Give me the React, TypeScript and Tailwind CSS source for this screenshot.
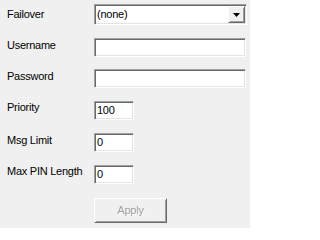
const sunken =
  "border border-t-[#a0a0a0] border-l-[#a0a0a0] border-b-white border-r-white shadow-[inset_1px_1px_0_#696969,inset_-1px_-1px_0_#e3e3e3] bg-white";
const raised =
  "border border-t-white border-l-white border-b-[#696969] border-r-[#696969] shadow-[inset_1px_1px_0_#f0f0f0,inset_-1px_-1px_0_#a0a0a0] bg-[#f0f0f0]";

function Label({ text, pad = "pt-[1px]" }: { text: string; pad?: string }) {
  return <div className={`w-[87px] shrink-0 leading-[13px] ${pad}`}>{text}</div>;
}

function TextBox({ value = "", wide = false }: { value?: string; wide?: boolean }) {
  return (
    <div
      className={`${sunken} h-[19px] ${wide ? "w-[152px]" : "w-[40px]"} pl-[2px] pt-[2px] leading-[13px] text-black`}
    >
      {value}
    </div>
  );
}

export default function App() {
  return (
    <div
      className="w-[250px] h-[228px] bg-[#f0f0f0] pl-[7px] pt-[4px] flex flex-col text-[11px] tracking-[-0.25px] text-black"
      style={{ fontFamily: '"Liberation Sans", Arial, sans-serif' }}
    >
      <div className="flex h-[21px]">
        <Label text="Failover" pad="pt-[4px]" />
        <div className={`${sunken} w-[153px] h-[21px] flex items-start`}>
          <div className="flex-1 pl-[2px] pt-[3px] leading-[13px]">(none)</div>
          <div className={`${raised} w-[17px] h-[17px] mt-[1px] mr-[1px] flex items-center justify-center`}>
            <svg width="7" height="4" viewBox="0 0 7 4">
              <path d="M0 0h7L3.5 4z" fill="#000" />
            </svg>
          </div>
        </div>
      </div>

      <div className="flex mt-[13px]">
        <Label text="Username" />
        <TextBox wide />
      </div>

      <div className="flex mt-[12px]">
        <Label text="Password" />
        <TextBox wide />
      </div>

      <div className="flex mt-[13px]">
        <Label text="Priority" pad="pt-0" />
        <TextBox value="100" />
      </div>

      <div className="flex mt-[13px]">
        <Label text="Msg Limit" />
        <TextBox value="0" />
      </div>

      <div className="flex mt-[13px]">
        <Label text="Max PIN Length" pad="pt-0" />
        <TextBox value="0" />
      </div>

      <div className="flex mt-[14px] pl-[87px]">
        <div
          className={`${raised} w-[73px] h-[25px] flex items-center justify-center text-[#a0a0a0] [text-shadow:1px_1px_0_#ffffff]`}
        >
          Apply
        </div>
      </div>
    </div>
  );
}
